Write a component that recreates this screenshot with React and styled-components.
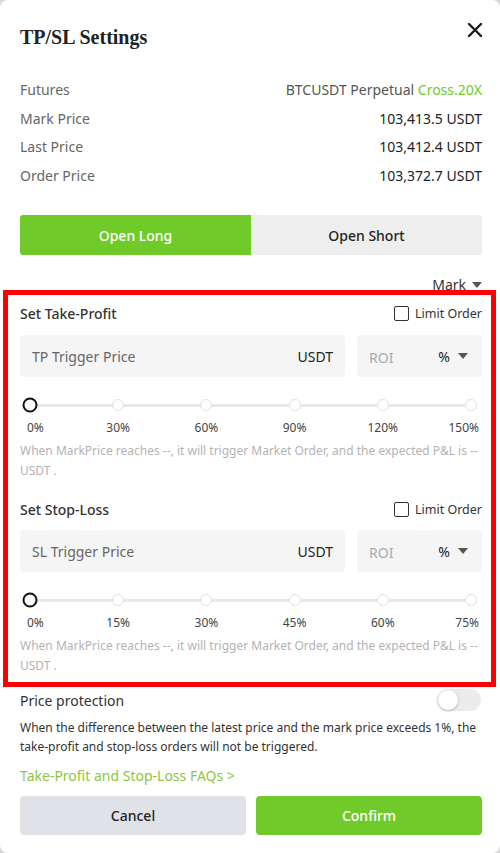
import React from 'react';
import styled, { createGlobalStyle } from 'styled-components';

const GlobalStyle = createGlobalStyle`
  html, body {
    margin: 0;
    padding: 0;
    background: #d8d8d8;
  }
  * { box-sizing: border-box; }
`;

const Modal = styled.div`
  width: 500px;
  height: 853px;
  background: #fff;
  border-radius: 8px;
  padding: 0 18px 0 20px;
  font-family: 'Noto Sans', 'Open Sans', sans-serif;
  color: #222;
  display: flex;
  flex-direction: column;
  overflow: hidden;
`;

const Header = styled.div`
  display: flex;
  justify-content: space-between;
  align-items: flex-start;
  padding-top: 25px;
  height: 76px;
`;

const Title = styled.h2`
  margin: 0;
  font-family: 'Liberation Serif', 'Times New Roman', serif;
  font-size: 20px;
  line-height: 24px;
  font-weight: bold;
  color: #222;
`;

const Close = styled.button`
  border: none;
  background: none;
  padding: 0;
  margin: -3px -1px 0 0;
  width: 16px;
  height: 16px;
  cursor: pointer;
`;

const InfoRow = styled.div`
  display: flex;
  justify-content: space-between;
  font-size: 14px;
  line-height: 28.5px;
`;

const Label = styled.span`
  color: #666;
`;

const Value = styled.span`
  color: ${p => p.$muted ? '#555' : '#222'};
`;

const Green = styled.span`
  color: #6ccb2c;
`;

const Tabs = styled.div`
  display: flex;
  margin-top: 25px;
  height: 40px;
  border-radius: 3px;
  overflow: hidden;
  background: #eeeeee;
`;

const Tab = styled.div`
  flex: 1;
  display: flex;
  align-items: center;
  justify-content: center;
  font-size: 14px;
  font-weight: 500;
  color: ${p => p.$active ? '#fff' : '#222'};
  background: ${p => p.$active ? '#6fca2a' : '#eeeeee'};
`;

const MarkRow = styled.div`
  display: flex;
  justify-content: flex-end;
  align-items: center;
  gap: 6px;
  margin-top: 20px;
  font-size: 14px;
  line-height: 20px;
  color: #333;
`;

const Caret = styled.span`
  display: inline-block;
  width: 0;
  height: 0;
  border-left: 5px solid transparent;
  border-right: 5px solid transparent;
  border-top: 6px solid #555;
`;

const Section = styled.div`
  position: relative;
  padding-top: 8px;
  padding-bottom: 6px;
`;

const Annotation = styled.div`
  position: absolute;
  left: -17px;
  right: -14px;
  top: -5px;
  bottom: -5px;
  border: 5px solid #ff0000;
  pointer-events: none;
`;

const Block = styled.div`
  margin-top: ${p => p.$first ? '0' : '18px'};
`;

const BlockHead = styled.div`
  display: flex;
  justify-content: space-between;
  align-items: center;
  height: 20px;
`;

const BlockTitle = styled.span`
  font-size: 14px;
  font-weight: 500;
  color: #333;
`;

const LimitOrder = styled.label`
  display: flex;
  align-items: center;
  gap: 6px;
  font-size: 12.5px;
  color: #333;
`;

const Check = styled.span`
  width: 15px;
  height: 15px;
  border: 1.5px solid #333;
  border-radius: 2px;
`;

const InputRow = styled.div`
  display: flex;
  gap: 12px;
  margin-top: ${p => p.$top}px;
`;

const Field = styled.div`
  flex: ${p => p.$fixed ? '0 0 125px' : '1 1 auto'};
  height: 42px;
  background: #f5f5f5;
  border-radius: 4px;
  display: flex;
  align-items: center;
  justify-content: space-between;
  padding: 0 ${p => p.$fixed ? 14 : 12}px 0 12px;
  font-size: 14px;
`;

const Placeholder = styled.span`
  color: ${p => p.$light ? '#aaa' : '#666'};
  margin-top: ${p => p.$light ? '2px' : '0'};
`;

const Unit = styled.span`
  color: #222;
  display: flex;
  align-items: center;
  gap: 8px;
`;

const Slider = styled.div`
  position: relative;
  height: 26px;
  margin: 15px 11px 0 10px;
  display: flex;
  align-items: center;
`;

const Track = styled.div`
  width: 100%;
  height: 3px;
  background: #e8e8e8;
`;

const Dot = styled.span`
  position: absolute;
  top: 50%;
  width: ${p => p.$active ? 15 : 12}px;
  height: ${p => p.$active ? 15 : 12}px;
  border-radius: 50%;
  background: #fff;
  border: ${p => p.$active ? '2.5px solid #111' : '1px solid #e2e2e2'};
  transform: translate(-50%, -50%);
`;

const Marks = styled.div`
  position: relative;
  height: 16px;
  margin: 2px 11px 0 10px;
  font-size: 12px;
  line-height: 16px;
  color: #444;
`;

const Mark = styled.span`
  position: absolute;
  top: 0;
  white-space: nowrap;
  transform: translateX(${p => p.$shift});
`;

const Hint = styled.p`
  margin: 5px 0 0;
  font-size: 12px;
  line-height: 20px;
  color: #b3b3b3;
  padding-right: 4px;
`;

const ProtectRow = styled.div`
  display: flex;
  justify-content: space-between;
  align-items: center;
  margin-top: 8px;
  height: 20px;
  padding-right: 1px;
`;

const ProtectTitle = styled.span`
  font-size: 14px;
  color: #333;
`;

const Switch = styled.span`
  position: relative;
  width: 44px;
  height: 22px;
  border-radius: 11px;
  background: #ececee;
`;

const Knob = styled.span`
  position: absolute;
  left: 1px;
  top: 1px;
  width: 20px;
  height: 20px;
  border-radius: 50%;
  background: #fff;
  box-shadow: 0 1px 3px rgba(0, 0, 0, 0.25);
`;

const Desc = styled.p`
  margin: 8px 0 0;
  font-size: 12px;
  line-height: 19px;
  color: #333;
`;

const FaqLink = styled.a`
  display: block;
  margin-top: 10px;
  font-size: 14px;
  line-height: 20px;
  color: #8cc63f;
  text-decoration: none;
`;

const Footer = styled.div`
  display: flex;
  gap: 10px;
  margin-top: 10px;
`;

const Btn = styled.button`
  flex: 1;
  height: 39px;
  border: none;
  border-radius: 4px;
  font-family: inherit;
  font-size: 14px;
  font-weight: 500;
  color: ${p => p.$primary ? '#fff' : '#222'};
  background: ${p => p.$primary ? '#6fca2a' : '#e1e2e7'};
`;

const SliderBlock = ({ marks }) => (
  <>
    <Slider>
      <Track />
      {marks.map((m, i) => (
        <Dot key={m} $active={i === 0} style={{ left: `${i * 20}%` }} />
      ))}
    </Slider>
    <Marks>
      {marks.map((m, i) => {
        const last = i === marks.length - 1;
        const shift = i === 0 ? '-3px' : last ? 'calc(-100% + 8px)' : '-50%';
        return (
          <Mark key={m} $shift={shift} style={{ left: `${i * 20}%` }}>{m}</Mark>
        );
      })}
    </Marks>
    <Hint>
      When MarkPrice reaches --, it will trigger Market Order, and the expected P&amp;L is -- USDT .
    </Hint>
  </>
);

const OrderBlock = ({ title, placeholder, marks, first }) => (
  <Block $first={first}>
    <BlockHead>
      <BlockTitle>{title}</BlockTitle>
      <LimitOrder><Check />Limit Order</LimitOrder>
    </BlockHead>
    <InputRow $top={first ? 12 : 11}>
      <Field>
        <Placeholder>{placeholder}</Placeholder>
        <Unit>USDT</Unit>
      </Field>
      <Field $fixed>
        <Placeholder $light>ROI</Placeholder>
        <Unit>%<Caret /></Unit>
      </Field>
    </InputRow>
    <SliderBlock marks={marks} />
  </Block>
);

const App = () => {
  return (
    <>
      <GlobalStyle />
      <Modal>
        <Header>
          <Title>TP/SL Settings</Title>
          <Close aria-label="close">
            <svg width="16" height="16" viewBox="0 0 16 16">
              <path d="M2 2 L14 14 M14 2 L2 14" stroke="#1a1a1a" strokeWidth="2.4" strokeLinecap="round" />
            </svg>
          </Close>
        </Header>

        <InfoRow>
          <Label>Futures</Label>
          <Value $muted>BTCUSDT Perpetual <Green>Cross.20X</Green></Value>
        </InfoRow>
        <InfoRow>
          <Label>Mark Price</Label>
          <Value>103,413.5 USDT</Value>
        </InfoRow>
        <InfoRow>
          <Label>Last Price</Label>
          <Value>103,412.4 USDT</Value>
        </InfoRow>
        <InfoRow>
          <Label>Order Price</Label>
          <Value>103,372.7 USDT</Value>
        </InfoRow>

        <Tabs>
          <Tab $active>Open Long</Tab>
          <Tab>Open Short</Tab>
        </Tabs>

        <MarkRow>Mark <Caret /></MarkRow>

        <Section>
          <OrderBlock
            first
            title="Set Take-Profit"
            placeholder="TP Trigger Price"
            marks={['0%', '30%', '60%', '90%', '120%', '150%']}
          />
          <OrderBlock
            title="Set Stop-Loss"
            placeholder="SL Trigger Price"
            marks={['0%', '15%', '30%', '45%', '60%', '75%']}
          />
          <Annotation />
        </Section>

        <ProtectRow>
          <ProtectTitle>Price protection</ProtectTitle>
          <Switch><Knob /></Switch>
        </ProtectRow>
        <Desc>
          When the difference between the latest price and the mark price exceeds 1%, the take-profit and stop-loss orders will not be triggered.
        </Desc>

        <FaqLink href="#">Take-Profit and Stop-Loss FAQs &gt;</FaqLink>

        <Footer>
          <Btn>Cancel</Btn>
          <Btn $primary>Confirm</Btn>
        </Footer>
      </Modal>
    </>
  );
};

export default App;
